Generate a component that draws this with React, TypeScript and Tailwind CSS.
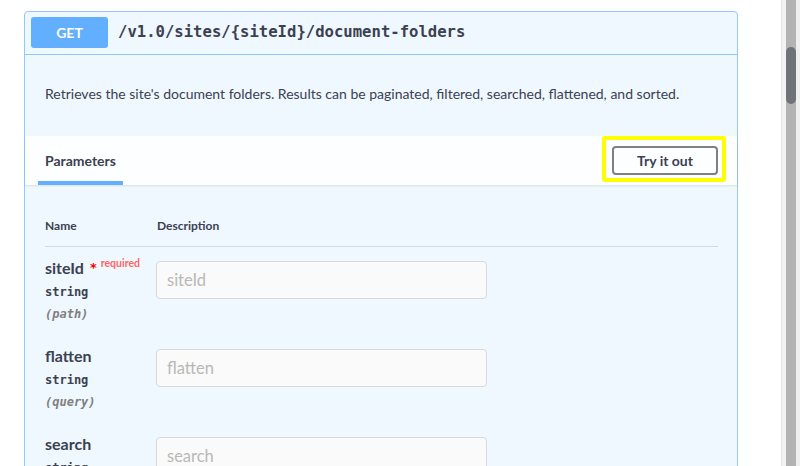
import React from 'react';

const sans = "font-['Lato','Open_Sans',sans-serif]";
const mono = "font-['DejaVu_Sans_Mono','Liberation_Mono',monospace]";

interface Param {
  name: string;
  type: string;
  location: string;
  required?: boolean;
}

const params: Param[] = [
  { name: 'siteId', type: 'string', location: '(path)', required: true },
  { name: 'flatten', type: 'string', location: '(query)' },
  { name: 'search', type: 'string', location: '(query)' },
];

const ParamRow: React.FC<{ param: Param }> = ({ param }) => (
  <div className="flex py-[10px]">
    <div className="w-[111px] shrink-0 flex flex-col">
      <div className="flex items-start h-[22px]">
        <span className="text-[16px] leading-[22px] font-bold text-[#3b4151]">{param.name}</span>
        {param.required && (
          <>
            <span className="ml-[6px] font-['DejaVu_Sans',sans-serif] text-[13px] leading-none font-bold text-[#ff0000] mt-[4px]">*</span>
            <span className="ml-[4px] text-[10.5px] leading-none font-bold text-[#ff6666] mt-[1px]">required</span>
          </>
        )}
      </div>
      <span className={`${mono} mt-[2px] text-[12px] leading-[22px] font-bold text-[#3b4151]`}>{param.type}</span>
      <span className={`${mono} text-[12px] leading-[22px] italic font-bold text-[#808080]`}>{param.location}</span>
    </div>
    <div className="pt-[4px]">
      <div className="w-[331px] h-[38px] rounded-[4px] border border-[#d9d9d9] bg-[#fafafa] px-[10px] flex items-center text-[16.5px] text-[#b8b8b8]">
        {param.name}
      </div>
    </div>
  </div>
);

export default function App() {
  return (
    <div className={`${sans} h-[466px] w-[800px] overflow-hidden bg-white flex`}>
      <div className="flex-1 pt-[11px] pl-[24px] pr-[43px]">
        <div className="rounded-[4px] border border-[#93c7fd] bg-[#eff7ff]">
          <div className="flex items-center pl-[6px] pt-[5px] pb-[6px] border-b border-[#93c7fd]">
            <div className="w-[77px] h-[31px] rounded-[3px] bg-[#61affe] flex items-center justify-center text-[14px] font-bold text-white">
              GET
            </div>
            <span className={`${mono} ml-[10px] text-[15.6px] font-bold text-[#3b4151]`}>
              /v1.0/sites/{'{siteId}'}/document-folders
            </span>
          </div>

          <div className="px-[20px] pt-[29px] pb-[32px]">
            <p className="text-[14px] leading-5 text-[#3b4151]">
              Retrieves the site's document folders. Results can be paginated, filtered, searched, flattened, and sorted.
            </p>
          </div>

          <div className="relative flex items-center justify-between h-[49px] pl-[13px] pr-[19px] bg-[#fcfeff] shadow-[0_1px_2px_rgba(0,0,0,0.1)]">
            <div className="self-stretch flex flex-col justify-end">
              <span className="px-[7px] text-[14px] leading-5 font-bold text-[#3b4151]">Parameters</span>
              <div className="mt-[10px] h-[4px] bg-[#61affe]" />
            </div>
            <button className="w-[106px] h-[29px] rounded-[4px] border-2 border-[#808080] bg-transparent text-[14px] font-bold text-[#3b4151]">
              Try it out
            </button>
            <div className="absolute top-0 right-[11px] w-[124px] h-[46px] border-[4px] border-[#ffff00] rounded-[3px]" />
          </div>

          <div className="pl-[20px] pr-[19px] pt-[33px]">
            <div className="flex pb-[12px] border-b border-[#d5dae2] text-[12px] leading-4 font-bold text-[#3b4151]">
              <span className="w-[112px]">Name</span>
              <span>Description</span>
            </div>
            {params.map(p => (
              <ParamRow key={p.name} param={p} />
            ))}
          </div>
        </div>
      </div>
      <div className="w-[19px] h-full flex">
        <div className="w-[5px] bg-[#f3f3f3] border-l border-[#e6e6e6]" />
        <div className="w-[10px] bg-[#b3b3b3] pt-[47px]">
          <div className="h-[57px] rounded-full bg-[#6f7277]" />
        </div>
        <div className="w-[4px] bg-[#efefef]" />
      </div>
    </div>
  );
}
